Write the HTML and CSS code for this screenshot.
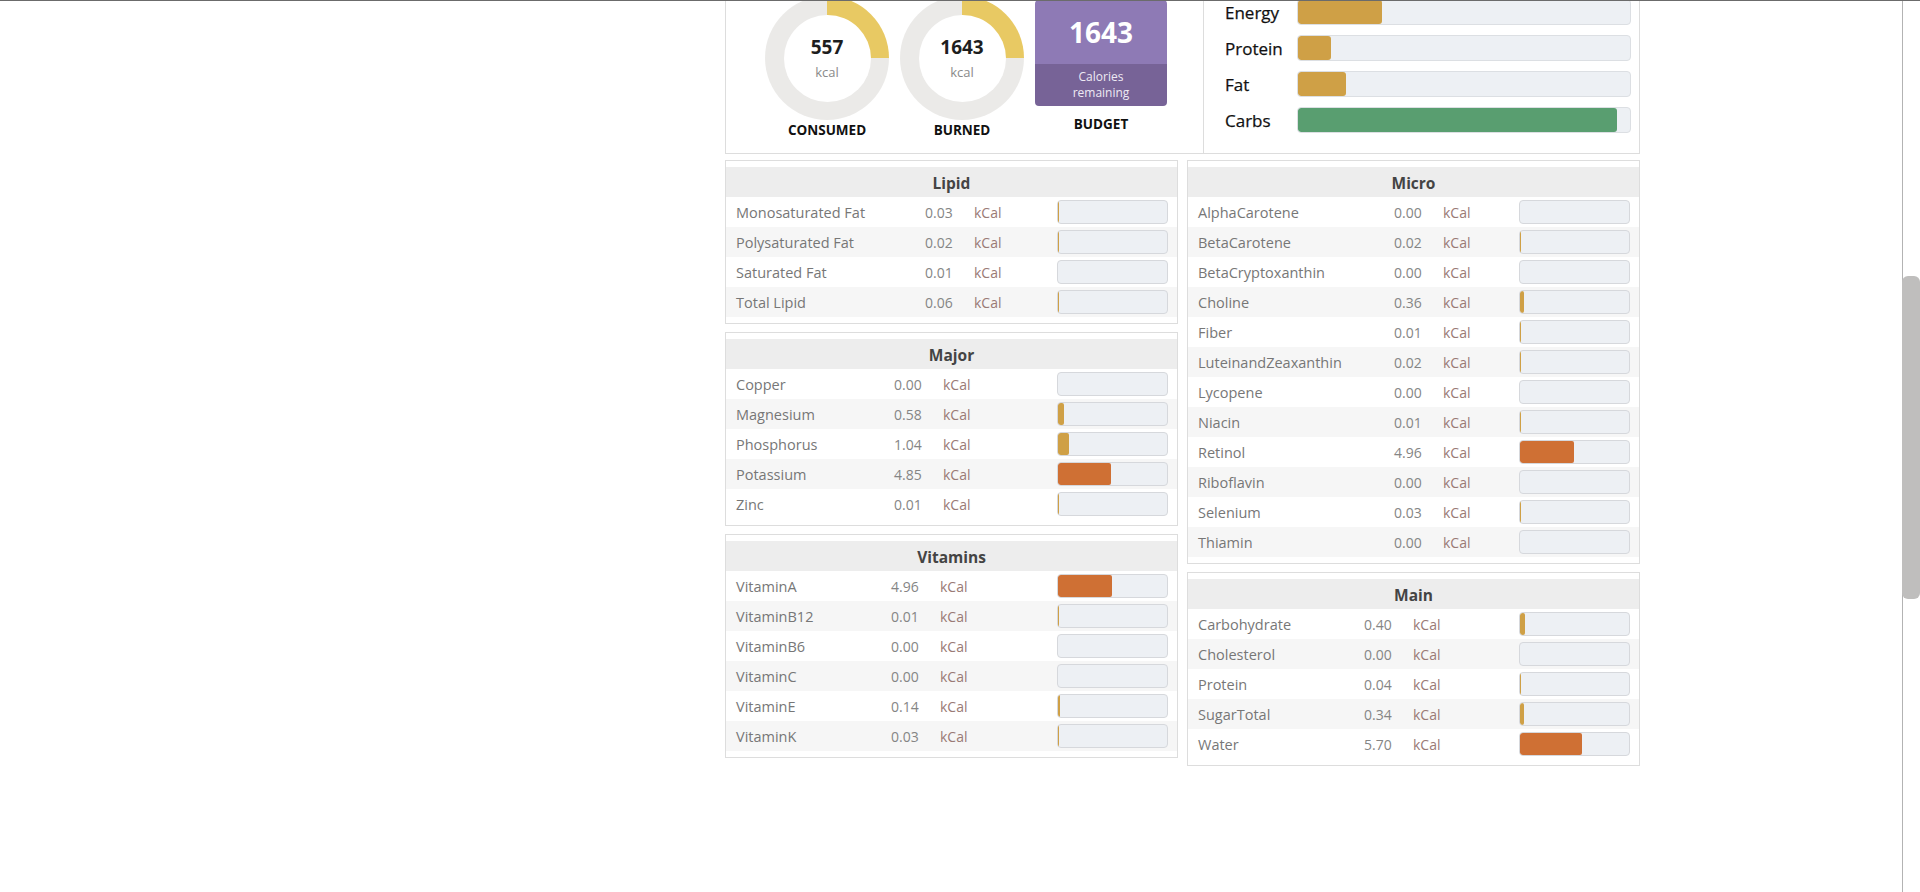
FILE: index.html
```html
<!DOCTYPE html>
<html lang="en">
<head>
<meta charset="utf-8">
<title>Nutrition</title>
<link rel="stylesheet" href="styles.css">
</head>
<body>
<div class="window">
  <main class="page">
    <div class="content">
      <section class="card summary">
        <div class="gauges">
          <div class="gauge">
            <div class="donut"><div class="donut-hole"><span class="donut-value">557</span><span class="donut-unit">kcal</span></div></div>
            <div class="gauge-label">CONSUMED</div>
          </div>
          <div class="gauge">
            <div class="donut"><div class="donut-hole"><span class="donut-value">1643</span><span class="donut-unit">kcal</span></div></div>
            <div class="gauge-label">BURNED</div>
          </div>
          <div class="gauge gauge--budget">
            <div class="budget-box">
              <div class="budget-value">1643</div>
              <div class="budget-caption">Calories<br>remaining</div>
            </div>
            <div class="gauge-label">BUDGET</div>
          </div>
        </div>
        <div class="macros">
          <div class="macro"><span class="macro-name">Energy</span><div class="macro-track"><div class="macro-fill gold" style="width:25.2%"></div></div></div>
          <div class="macro"><span class="macro-name">Protein</span><div class="macro-track"><div class="macro-fill gold" style="width:10%"></div></div></div>
          <div class="macro"><span class="macro-name">Fat</span><div class="macro-track"><div class="macro-fill gold" style="width:14.5%"></div></div></div>
          <div class="macro"><span class="macro-name">Carbs</span><div class="macro-track"><div class="macro-fill green" style="width:96%"></div></div></div>
        </div>
      </section>

      <div class="columns">
        <div class="column">
          <section class="card nutrients nutrients--lipid">
            <h3 class="card-title">Lipid</h3>
            <div class="row"><span class="name">Monosaturated Fat</span><span class="val">0.03</span><span class="unit">kCal</span><div class="track"><div class="fill" style="width:1px"></div></div></div>
            <div class="row"><span class="name">Polysaturated Fat</span><span class="val">0.02</span><span class="unit">kCal</span><div class="track"><div class="fill" style="width:1px"></div></div></div>
            <div class="row"><span class="name">Saturated Fat</span><span class="val">0.01</span><span class="unit">kCal</span><div class="track"></div></div>
            <div class="row"><span class="name">Total Lipid</span><span class="val">0.06</span><span class="unit">kCal</span><div class="track"><div class="fill" style="width:1px"></div></div></div>
          </section>
          <section class="card nutrients nutrients--major">
            <h3 class="card-title">Major</h3>
            <div class="row"><span class="name">Copper</span><span class="val">0.00</span><span class="unit">kCal</span><div class="track"></div></div>
            <div class="row"><span class="name">Magnesium</span><span class="val">0.58</span><span class="unit">kCal</span><div class="track"><div class="fill" style="width:6px"></div></div></div>
            <div class="row"><span class="name">Phosphorus</span><span class="val">1.04</span><span class="unit">kCal</span><div class="track"><div class="fill" style="width:11px"></div></div></div>
            <div class="row"><span class="name">Potassium</span><span class="val">4.85</span><span class="unit">kCal</span><div class="track"><div class="fill high" style="width:53px"></div></div></div>
            <div class="row"><span class="name">Zinc</span><span class="val">0.01</span><span class="unit">kCal</span><div class="track"><div class="fill" style="width:1px"></div></div></div>
          </section>
          <section class="card nutrients nutrients--vitamins">
            <h3 class="card-title">Vitamins</h3>
            <div class="row"><span class="name">VitaminA</span><span class="val">4.96</span><span class="unit">kCal</span><div class="track"><div class="fill high" style="width:54px"></div></div></div>
            <div class="row"><span class="name">VitaminB12</span><span class="val">0.01</span><span class="unit">kCal</span><div class="track"><div class="fill" style="width:1px"></div></div></div>
            <div class="row"><span class="name">VitaminB6</span><span class="val">0.00</span><span class="unit">kCal</span><div class="track"></div></div>
            <div class="row"><span class="name">VitaminC</span><span class="val">0.00</span><span class="unit">kCal</span><div class="track"></div></div>
            <div class="row"><span class="name">VitaminE</span><span class="val">0.14</span><span class="unit">kCal</span><div class="track"><div class="fill" style="width:1.5px"></div></div></div>
            <div class="row"><span class="name">VitaminK</span><span class="val">0.03</span><span class="unit">kCal</span><div class="track"><div class="fill" style="width:1px"></div></div></div>
          </section>
        </div>

        <div class="column">
          <section class="card nutrients nutrients--micro">
            <h3 class="card-title">Micro</h3>
            <div class="row"><span class="name">AlphaCarotene</span><span class="val">0.00</span><span class="unit">kCal</span><div class="track"></div></div>
            <div class="row"><span class="name">BetaCarotene</span><span class="val">0.02</span><span class="unit">kCal</span><div class="track"><div class="fill" style="width:1px"></div></div></div>
            <div class="row"><span class="name">BetaCryptoxanthin</span><span class="val">0.00</span><span class="unit">kCal</span><div class="track"></div></div>
            <div class="row"><span class="name">Choline</span><span class="val">0.36</span><span class="unit">kCal</span><div class="track"><div class="fill" style="width:4px"></div></div></div>
            <div class="row"><span class="name">Fiber</span><span class="val">0.01</span><span class="unit">kCal</span><div class="track"><div class="fill" style="width:1px"></div></div></div>
            <div class="row"><span class="name">LuteinandZeaxanthin</span><span class="val">0.02</span><span class="unit">kCal</span><div class="track"><div class="fill" style="width:1px"></div></div></div>
            <div class="row"><span class="name">Lycopene</span><span class="val">0.00</span><span class="unit">kCal</span><div class="track"></div></div>
            <div class="row"><span class="name">Niacin</span><span class="val">0.01</span><span class="unit">kCal</span><div class="track"><div class="fill" style="width:1px"></div></div></div>
            <div class="row"><span class="name">Retinol</span><span class="val">4.96</span><span class="unit">kCal</span><div class="track"><div class="fill high" style="width:54px"></div></div></div>
            <div class="row"><span class="name">Riboflavin</span><span class="val">0.00</span><span class="unit">kCal</span><div class="track"></div></div>
            <div class="row"><span class="name">Selenium</span><span class="val">0.03</span><span class="unit">kCal</span><div class="track"><div class="fill" style="width:1px"></div></div></div>
            <div class="row"><span class="name">Thiamin</span><span class="val">0.00</span><span class="unit">kCal</span><div class="track"></div></div>
          </section>
          <section class="card nutrients nutrients--main">
            <h3 class="card-title">Main</h3>
            <div class="row"><span class="name">Carbohydrate</span><span class="val">0.40</span><span class="unit">kCal</span><div class="track"><div class="fill" style="width:5px"></div></div></div>
            <div class="row"><span class="name">Cholesterol</span><span class="val">0.00</span><span class="unit">kCal</span><div class="track"></div></div>
            <div class="row"><span class="name">Protein</span><span class="val">0.04</span><span class="unit">kCal</span><div class="track"><div class="fill" style="width:1px"></div></div></div>
            <div class="row"><span class="name">SugarTotal</span><span class="val">0.34</span><span class="unit">kCal</span><div class="track"><div class="fill" style="width:4px"></div></div></div>
            <div class="row"><span class="name">Water</span><span class="val">5.70</span><span class="unit">kCal</span><div class="track"><div class="fill high" style="width:62px"></div></div></div>
          </section>
        </div>
      </div>
    </div>
  </main>
  <div class="scrollbar"><div class="scrollbar-thumb"></div></div>
</div>
</body>
</html>
```

FILE: styles.css
```css
* { box-sizing: border-box; }

html, body {
  margin: 0;
  padding: 0;
  background: #fff;
}

body {
  font-family: "Open Sans", "Liberation Sans", sans-serif;
  color: #333;
  overflow: hidden;
}

.window {
  display: flex;
  height: 892px;
  border-top: 1px solid #6b6b6b;
  overflow: hidden;
}

.page {
  flex: 1;
  overflow: hidden;
}

.content {
  width: 915px;
  margin-left: 725px;
}

/* scrollbar */
.scrollbar {
  width: 18px;
  flex: 0 0 18px;
  background: linear-gradient(to right, #b3b3b3 0, #b3b3b3 1px, #fff 1px);
}

.scrollbar-thumb {
  margin-top: 275px;
  height: 323px;
  background: #bfbebd;
  border-radius: 6px;
}

/* cards */
.card {
  border: 1px solid #dddddd;
  background: #fff;
}

/* summary */
.summary {
  display: flex;
  margin-top: -20px;
}

.gauges {
  flex: 0 0 477px;
  display: flex;
  align-items: flex-start;
  gap: 11px;
  padding: 14px 0 15px 39px;
}

.gauge {
  display: flex;
  flex-direction: column;
  align-items: center;
}

.donut {
  width: 124px;
  height: 124px;
  border-radius: 50%;
  background: conic-gradient(#e8c963 0 25%, #ebeae8 25% 100%);
  display: flex;
  align-items: center;
  justify-content: center;
}

.donut-hole {
  width: 87px;
  height: 87px;
  border-radius: 50%;
  background: #fff;
  display: flex;
  flex-direction: column;
  align-items: center;
  justify-content: center;
}

.donut-value {
  font-size: 19px;
  font-weight: 700;
  line-height: 22px;
  color: #1e1e1e;
}

.donut-unit {
  font-size: 13px;
  line-height: 16px;
  margin-top: 6px;
  color: #8a8a8a;
}

.gauge-label {
  margin-top: 2px;
  font-size: 13.5px;
  font-weight: 700;
  line-height: 16px;
  color: #111;
}

.budget-box {
  margin-top: 4px;
  width: 132px;
  height: 106px;
  border-radius: 4px;
  overflow: hidden;
  display: flex;
  flex-direction: column;
}

.budget-value {
  height: 64px;
  line-height: 64px;
  background: #8e7ab5;
  color: #fff;
  font-size: 28px;
  font-weight: 700;
  text-align: center;
}

.budget-caption {
  flex: 1;
  background: #776397;
  color: #eeeaf4;
  font-size: 12px;
  line-height: 16px;
  text-align: center;
  display: flex;
  align-items: center;
  justify-content: center;
}

.gauge--budget .gauge-label {
  margin-top: 10px;
}

.macros {
  flex: 1;
  border-left: 1px solid #dddddd;
  display: flex;
  flex-direction: column;
  gap: 10px;
  padding: 17px 8px 20px 21px;
}

.macro {
  display: flex;
  align-items: center;
  height: 26px;
}

.macro-name {
  width: 72px;
  flex: 0 0 72px;
  font-size: 17px;
  font-weight: 500;
  color: #111;
  -webkit-text-stroke: 0.25px #111;
}

.macro-track {
  flex: 1;
  height: 26px;
  border: 1px solid #dcdfe3;
  background: #edf0f4;
  border-radius: 4px;
  overflow: hidden;
}

.macro-fill {
  height: 100%;
  border-radius: 3px;
}

.gold { background: #cfa046; }
.green { background: #599e70; }

/* nutrient tables */
.columns {
  display: grid;
  grid-template-columns: 453px 453px;
  column-gap: 9px;
  margin-top: 6px;
  align-items: start;
}

.column {
  display: flex;
  flex-direction: column;
  gap: 8px;
}

.nutrients {
  padding: 6px 0 6px;
  --name-w: 189px;
}

.nutrients--lipid { --name-w: 189px; }
.nutrients--major { --name-w: 158px; }
.nutrients--vitamins { --name-w: 155px; }
.nutrients--micro { --name-w: 196px; }
.nutrients--main { --name-w: 166px; }

.card-title {
  margin: 0;
  height: 30px;
  padding-top: 2px;
  line-height: 28px;
  background: #ededed;
  text-align: center;
  font-size: 15.5px;
  font-weight: 700;
  color: #444;
}

.row {
  display: grid;
  grid-template-columns: var(--name-w) 49px 1fr 111px;
  align-items: center;
  height: 30px;
  padding: 0 9px 0 10px;
  font-size: 14px;
  font-weight: 400;
  line-height: 20px;
}

.row > span {
  padding-top: 2px;
}

.row:nth-child(odd) {
  background: #f6f6f6;
}

.name {
  font-size: 14.5px;
  color: #777;
  white-space: nowrap;
}

.val {
  color: #858585;
}

.unit {
  color: #9a7a75;
}

.track {
  height: 24px;
  border: 1px solid #d6d8dc;
  background: #edf0f4;
  border-radius: 4px;
  overflow: hidden;
}

.fill {
  height: 100%;
  background: #cfa046;
  border-radius: 2px;
}

.fill.high {
  background: #cf7034;
}
```
